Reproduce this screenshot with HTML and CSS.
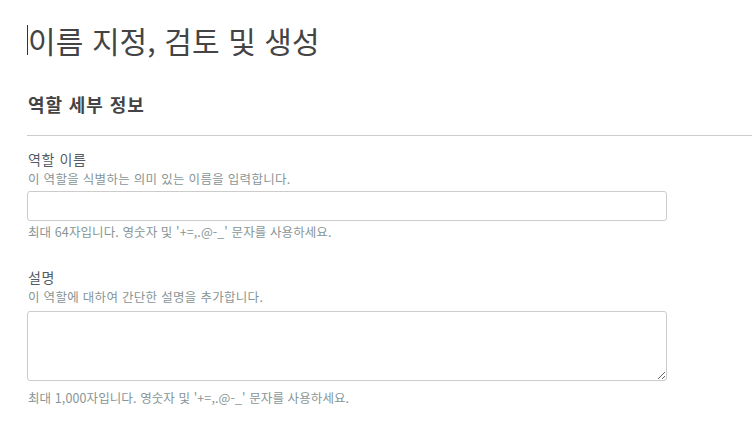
FILE: index.html
```html
<!DOCTYPE html>
<html lang="ko">
<head>
<meta charset="utf-8">
<link rel="stylesheet" href="styles.css">
</head>
<body>
<main class="page">
  <h1 class="title"><span class="caret"></span>이름 지정, 검토 및 생성</h1>
  <section class="panel">
    <h2 class="panel-title">역할 세부 정보</h2>
    <div class="panel-body">
      <div class="field">
        <label class="label">역할 이름</label>
        <div class="desc">이 역할을 식별하는 의미 있는 이름을 입력합니다.</div>
        <input class="input" type="text">
        <div class="hint">최대 64자입니다. 영숫자 및 '+=,.@-_' 문자를 사용하세요.</div>
      </div>
      <div class="field">
        <label class="label">설명</label>
        <div class="desc">이 역할에 대하여 간단한 설명을 추가합니다.</div>
        <textarea class="textarea"></textarea>
        <div class="hint">최대 1,000자입니다. 영숫자 및 '+=,.@-_' 문자를 사용하세요.</div>
      </div>
    </div>
  </section>
</main>
</body>
</html>
```
FILE: styles.css
```css
* { box-sizing: border-box; }
html, body { margin: 0; padding: 0; background: #fff; }
body {
  font-family: "Noto Sans CJK KR", "Liberation Sans", Arial, sans-serif;
  color: #444;
  overflow: hidden;
}
.page { padding: 18px 0 0 27px; }
.title {
  margin: 0;
  font-size: 30px;
  font-weight: 400;
  color: #444;
  line-height: 44px;
  letter-spacing: 0.1px;
  display: flex;
  align-items: center;
}
.caret {
  display: inline-block;
  width: 1px;
  height: 30px;
  background: #333;
}
.panel { margin-top: 30px; }
.panel-title {
  margin: 0;
  font-size: 18px;
  font-weight: 700;
  color: #444;
  line-height: 24px;
  letter-spacing: 0.9px;
  padding-left: 1px;
  padding-bottom: 19px;
  border-bottom: 1px solid #ccc;
}
.panel-body { padding-top: 13px; width: 640px; }
.field { display: flex; flex-direction: column; }
.field + .field { margin-top: 26px; }
.label {
  font-size: 14px;
  line-height: 21px;
  color: #545b64;
  letter-spacing: 0.6px;
  padding-left: 1px;
}
.desc {
  font-size: 12.5px;
  line-height: 18px;
  color: #879596;
  letter-spacing: 0.3px;
  padding-left: 1px;
}
.input {
  margin-top: 3px;
  height: 30px;
  width: 640px;
  border: 1px solid #ccc;
  border-radius: 3px;
  font: inherit;
  padding: 0 8px;
}
.textarea {
  margin-top: 5px;
  height: 70px;
  width: 640px;
  border: 1px solid #ccc;
  border-radius: 3px;
  font: inherit;
  resize: vertical;
  display: block;
}
.hint {
  margin-top: 2px;
  font-size: 12.5px;
  line-height: 18px;
  color: #879596;
  letter-spacing: 0.1px;
  padding-left: 1px;
}
.textarea + .hint { margin-top: 8px; }
```
